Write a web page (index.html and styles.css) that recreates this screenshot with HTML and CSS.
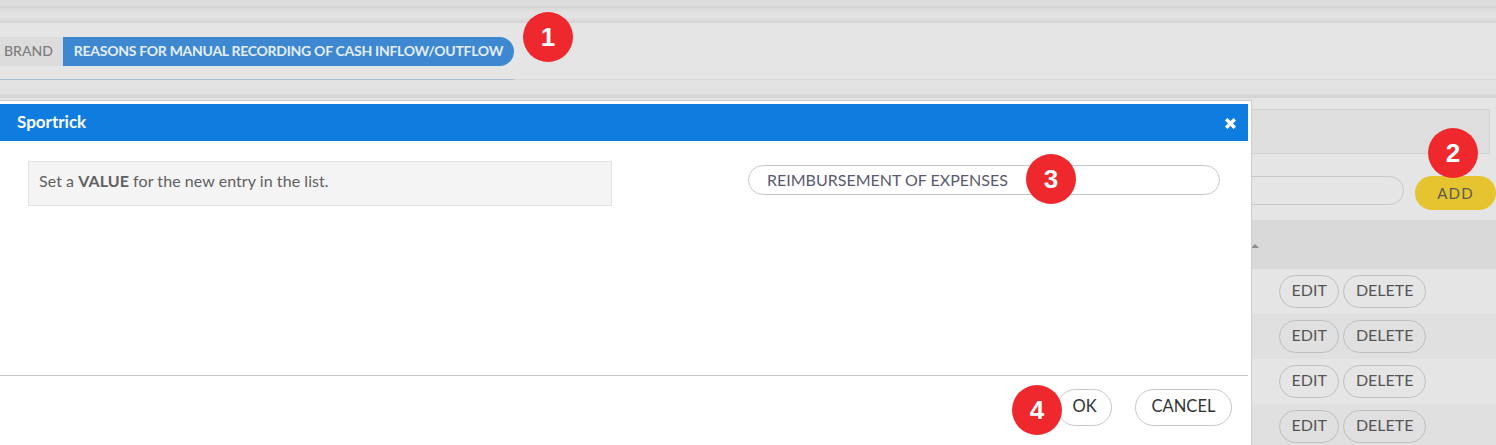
FILE: index.html
```html
<!DOCTYPE html>
<html lang="en">
<head>
<meta charset="UTF-8">
<title>Sportrick</title>
<link rel="stylesheet" href="styles.css">
</head>
<body>
<main class="page">
	<div class="band band-top"></div>
	<div class="band band-second"></div>
	<nav class="crumbs">
		<div class="crumb-list">
			<span class="crumb">BRAND</span>
			<span class="crumb crumb-active">REASONS FOR MANUAL RECORDING OF CASH INFLOW/OUTFLOW</span>
		</div>
	</nav>
	<div class="band band-third"></div>
	<section class="content">
		<div class="hint-back"></div>
		<div class="add-row">
			<div class="add-field"></div>
			<button class="btn-add">ADD</button>
		</div>
		<div class="table-head"><span class="sort-arrow"></span></div>
		<div class="row"><button class="btn-row">EDIT</button><button class="btn-row">DELETE</button></div>
		<div class="row row-alt"><button class="btn-row">EDIT</button><button class="btn-row">DELETE</button></div>
		<div class="row"><button class="btn-row">EDIT</button><button class="btn-row">DELETE</button></div>
		<div class="row row-alt"><button class="btn-row">EDIT</button><button class="btn-row">DELETE</button></div>
	</section>
</main>

<div class="modal">
	<header class="modal-head">
		<h3>Sportrick</h3>
		<svg class="modal-close" width="13" height="13" viewBox="0 0 13 13"><path d="M2.2 2.2L10.8 10.8M10.8 2.2L2.2 10.8" stroke="#fff" stroke-width="3.4"/></svg>
	</header>
	<div class="modal-body">
		<p class="hint">Set a <b>VALUE</b> for the new entry in the list.</p>
		<input class="value-input" type="text" value="REIMBURSEMENT OF EXPENSES">
	</div>
	<footer class="modal-foot">
		<button class="btn-foot btn-ok">OK</button>
		<button class="btn-foot btn-cancel">CANCEL</button>
	</footer>
</div>

<span class="step step-1">1</span>
<span class="step step-2">2</span>
<span class="step step-3">3</span>
<span class="step step-4">4</span>
</body>
</html>
```

FILE: styles.css
```css
*{padding:0;margin:0;box-sizing:border-box;}
html,body{height:100%;overflow:hidden;}
body{
	background:#e5e5e5;
	font-family:"Lato","Liberation Sans",sans-serif;
	color:#555;
}
button{font-family:inherit;cursor:pointer;background:transparent;}

.band{background:linear-gradient(#e4e4e4,#e2e2e2 70%,#d2d2d2);}
.band-top{height:8px;background:linear-gradient(#dddddd,#dddddd 70%,#d2d2d2);}
.band-second{height:15px;border-bottom:1px solid #d4d4d4;background:linear-gradient(#dadada,#e2e2e2 35%,#e2e2e2 65%,#d6d6d6);}
.band-third{height:18px;}

.crumbs{height:57px;padding-top:14px;border-bottom:1px solid #d9d9d9;}
.crumb-list{
	display:flex;
	width:514px;
	padding-bottom:13px;
	border-bottom:1px solid #a9bdd0;
	box-sizing:content-box;
	height:29px;
	font-size:14px;
	font-weight:500;
	line-height:27px;
}
.crumb{background:#dcdcdc;color:#7d7d7d;padding:0 10px 0 4px;}
.crumb-active{
	flex:1;
	background:#3d88d0;
	color:#e4eef8;
	padding:0 0 0 11px;
	border-radius:0 15px 15px 0;
	white-space:nowrap;
	font-weight:700;
	letter-spacing:-.28px;
}

.content{padding-top:11px;}
.hint-back{
	height:45px;
	margin-right:6px;
	background:#dedede;
	border:1px solid #d2d2d2;
}
.add-row{
	display:flex;
	justify-content:flex-end;
	gap:11px;
	height:67px;
	padding-top:22px;
}
.add-field{width:300px;height:29px;border:1px solid #c8c8c8;border-radius:15px;}
.btn-add{
	width:81px;
	height:34px;
	border:none;
	border-radius:17px;
	background:#e5c430;
	color:#5c5a50;
	font-size:15px;
	letter-spacing:1.2px;
}
.table-head{height:49px;background:#d9d9d9;padding:24px 0 0 1251px;margin-top:-1px;}
.sort-arrow{
	display:block;
	width:0;
	border:4px solid transparent;
	border-top:none;
	border-bottom:4px solid #8c8c8c;
}
.row{
	display:flex;
	justify-content:flex-end;
	gap:4px;
	height:45px;
	padding:6px 70px 0 0;
	background:#e5e5e5;
}
.row-alt{background:#e0e0e0;}
.btn-row{
	height:33px;
	padding:0 11.5px 4px;
	border:1px solid #bfbfbf;
	border-radius:17px;
	color:#555;
	font-size:16px;
}

.modal{
	position:absolute;
	left:0;
	top:100px;
	bottom:0;
	width:1252px;
	display:flex;
	flex-direction:column;
	padding:3px 3px 0 0;
	background:#fff;
	border-top:1px solid #ccc;
	border-right:1px solid #ccc;
}
.modal-head{
	display:flex;
	justify-content:space-between;
	align-items:center;
	flex:none;
	height:37px;
	padding:0 11px 0 17px;
	background:#0f7cdf;
	color:#fff;
}
.modal-head h3{font-size:17px;font-weight:700;margin-top:-3px;}
.modal-close{margin-top:1px;}
.modal-body{
	display:flex;
	justify-content:space-between;
	align-items:flex-start;
	height:235px;
	padding:20px 28px 0 28px;
	border-bottom:1px solid #c8c8c8;
}
.hint{
	width:584px;
	height:45px;
	padding-left:10px;
	background:#f4f4f4;
	border:1px solid #e2e2e2;
	color:#606060;
	font-size:16px;
	line-height:38px;
	letter-spacing:.06px;
}
.value-input{
	width:472px;
	height:30px;
	margin-top:4px;
	padding:0 18px 2px;
	border:1px solid #c8c8c8;
	border-radius:15px;
	outline:none;
	font-family:inherit;
	font-size:16px;
	color:#5a5a6e;
}
.modal-foot{
	display:flex;
	justify-content:flex-end;
	gap:23px;
	padding:13px 16px 0 0;
}
.btn-foot{
	height:37px;
	padding-bottom:3px;
	border:1px solid #c8c8c8;
	border-radius:19px;
	color:#333;
	font-size:16.5px;
}
.btn-ok{width:55px;}
.btn-cancel{width:97px;}

/* numbered markers over the screenshot */
.step{
	position:absolute;
	width:50px;
	height:50px;
	border-radius:50%;
	background:#ee282c;
	color:#fff;
	font:bold 26px/50px "Liberation Sans",sans-serif;
	text-align:center;
}
.step-1{left:523px;top:12px;}
.step-2{left:1428px;top:128px;}
.step-3{left:1026px;top:154px;}
.step-4{left:1012px;top:385px;}
```
